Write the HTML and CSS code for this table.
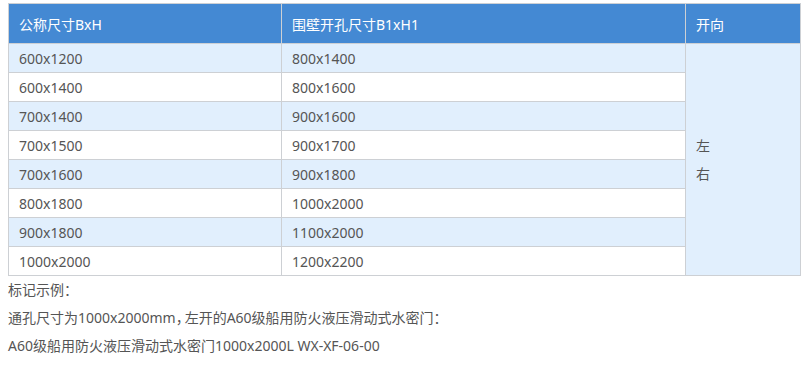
FILE: index.html
```html
<!DOCTYPE html>
<html lang="zh">
<head>
<meta charset="utf-8">
<link rel="stylesheet" href="styles.css">
</head>
<body>
<div class="page">
  <table class="spec">
    <colgroup>
      <col class="c1"><col class="c2"><col class="c3">
    </colgroup>
    <thead>
      <tr><th>公称尺寸BxH</th><th>围壁开孔尺寸B1xH1</th><th>开向</th></tr>
    </thead>
    <tbody>
      <tr class="alt"><td>600x1200</td><td>800x1400</td><td class="dir" rowspan="8">左<br>右</td></tr>
      <tr><td>600x1400</td><td>800x1600</td></tr>
      <tr class="alt"><td>700x1400</td><td>900x1600</td></tr>
      <tr><td>700x1500</td><td>900x1700</td></tr>
      <tr class="alt"><td>700x1600</td><td>900x1800</td></tr>
      <tr><td>800x1800</td><td>1000x2000</td></tr>
      <tr class="alt"><td>900x1800</td><td>1100x2000</td></tr>
      <tr><td>1000x2000</td><td>1200x2200</td></tr>
    </tbody>
  </table>
  <div class="notes">
    <p>标记示例：</p>
    <p>通孔尺寸为1000x2000mm<span class="punct">，</span>左开的A60级船用防火液压滑动式水密门：</p>
    <p>A60级船用防火液压滑动式水密门1000x2000L WX-XF-06-00</p>
  </div>
</div>
</body>
</html>
```
FILE: styles.css
```css
html, body {
  margin: 0;
  padding: 0;
  background: #fff;
}
body {
  font-family: "Noto Sans", "Noto Sans CJK SC", sans-serif;
  font-size: 14px;
  color: #555;
}
.page {
  padding: 3px 7px 0 8px;
}
.spec {
  border-collapse: collapse;
  width: 792px;
  table-layout: fixed;
}
.c1 { width: 273px; }
.c2 { width: 404px; }
.c3 { width: 115px; }
.spec th, .spec td {
  border: 1px solid #cdd0d4;
  text-align: left;
  padding: 0 10px;
  font-weight: normal;
}
.spec th {
  background: #4489d3;
  color: #fff;
  height: 39px;
}
.spec td {
  height: 28px;
  background: #fff;
}
.spec tr.alt td {
  background: #e1effd;
}
.spec td.dir {
  background: #e1effd;
  line-height: 28px;
  vertical-align: middle;
}
.notes p {
  margin: 0;
  line-height: 28px;
}
.notes .punct {
  letter-spacing: -5px;
}
```
